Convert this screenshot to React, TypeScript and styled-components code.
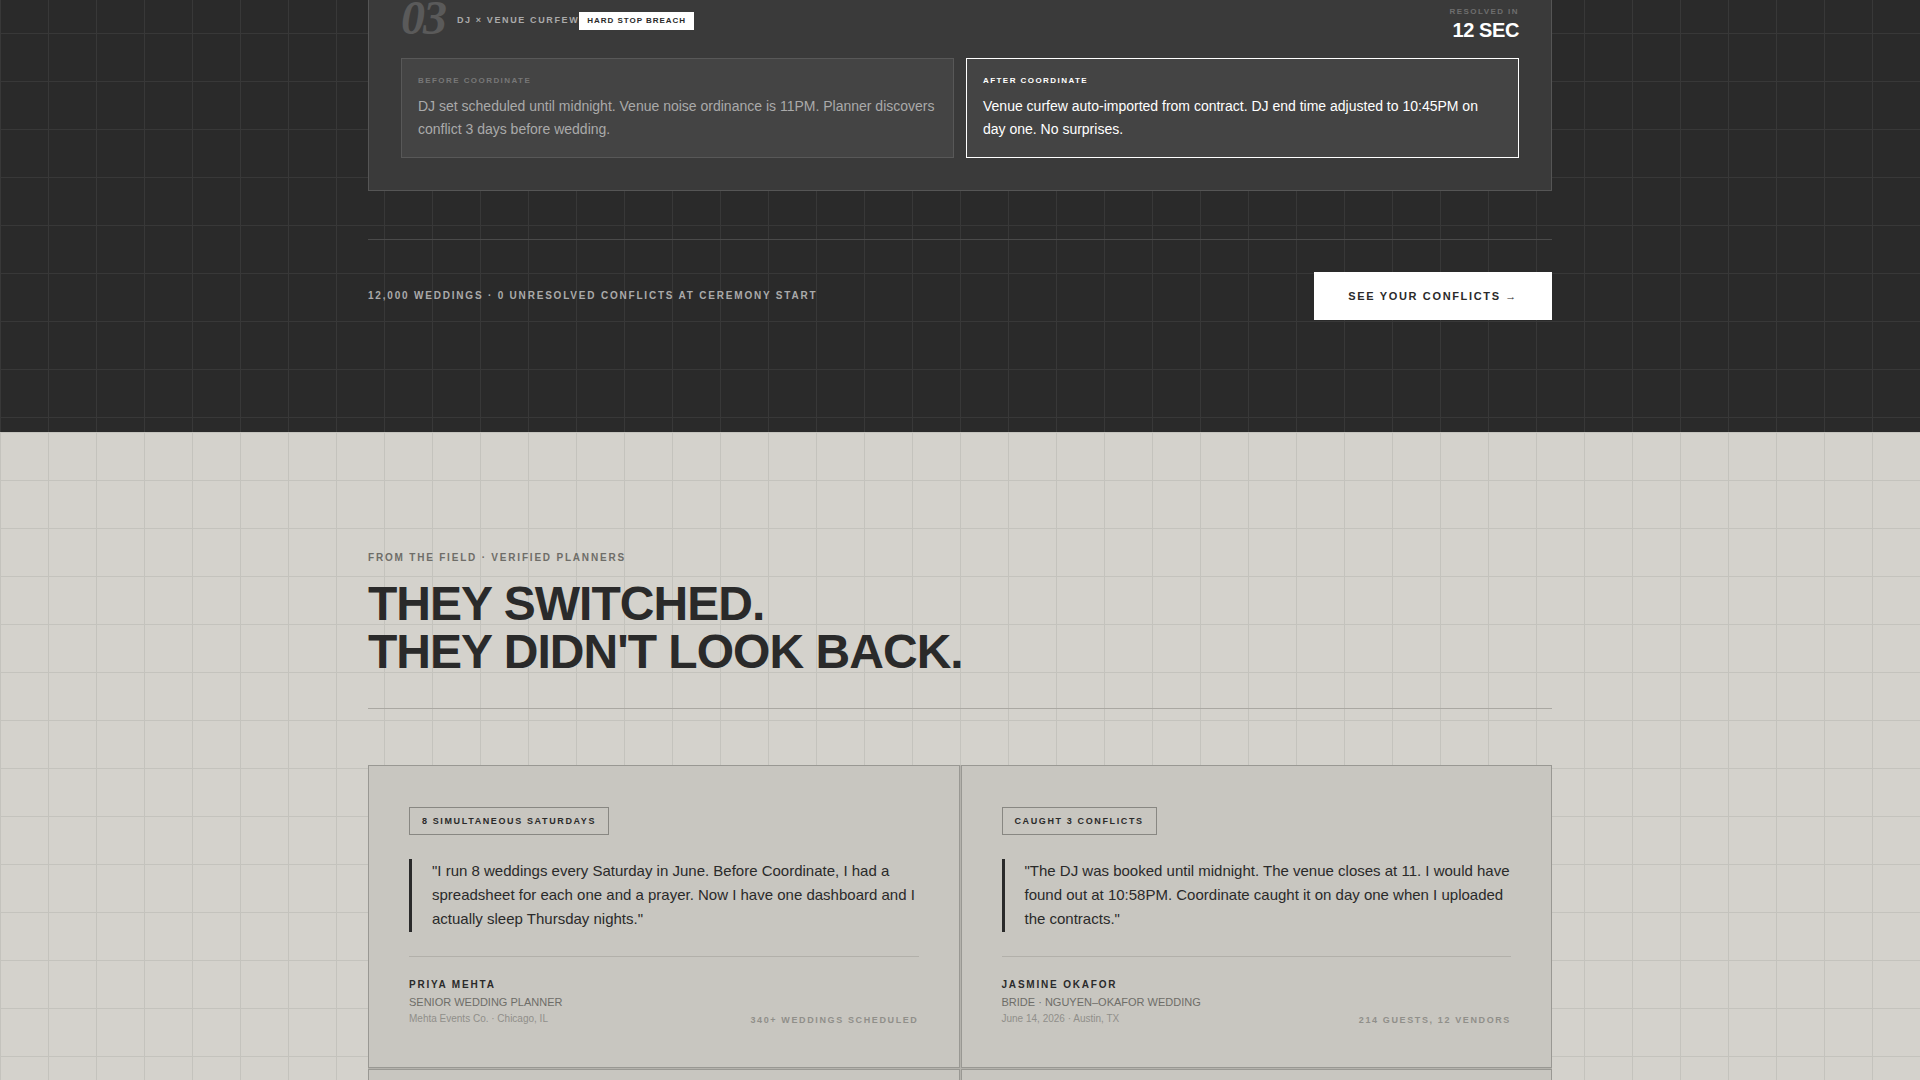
import React from 'react';
import styled, { createGlobalStyle, css } from 'styled-components';

const GlobalStyle = createGlobalStyle`
  *, *::before, *::after { box-sizing: border-box; }
  html, body { margin: 0; padding: 0; }
  body {
    font-family: "Liberation Sans", Arial, sans-serif;
    background: #d4d2cc;
    color: #2a2a2a;
    overflow: hidden;
    height: 100vh;
  }
  p, h2, h3, blockquote, figure { margin: 0; }
`;

const gridLines = (color: string) => css`
  background-image:
    linear-gradient(${color} 1px, transparent 1px),
    linear-gradient(90deg, ${color} 1px, transparent 1px);
  background-size: 48px 48px;
`;

const label = css<{ $size?: number }>`
  font-size: ${({ $size = 10 }) => $size}px;
  letter-spacing: 0.18em;
  font-weight: 700;
  text-transform: uppercase;
`;

const DarkSection = styled.section`
  background-color: #2a2a2a;
  ${gridLines('#383838')}
  background-position: 0 33px;
  padding-bottom: 112px;
`;

const LightSection = styled.section`
  background-color: #d4d2cc;
  ${gridLines('#c4c3bd')}
  padding: 112px 0;
`;

const Container = styled.div`
  max-width: 1280px;
  margin: 0 auto;
  padding: 0 48px;
`;

const ConflictCard = styled.article`
  background: #3a3a3a;
  border: 1px solid #555;
  border-top: 0;
  padding: 0 32px 32px;
`;

const ConflictHeader = styled.header`
  display: flex;
  align-items: flex-start;
  justify-content: space-between;
  height: 58px;
`;

const ConflictTitle = styled.div`
  display: flex;
  align-items: flex-end;
  gap: 12px;
`;

const ConflictNumber = styled.span`
  font-family: "Liberation Serif", "Times New Roman", serif;
  font-size: 48px;
  font-style: italic;
  font-weight: 700;
  line-height: 36px;
  color: #5a5a5a;
  letter-spacing: -2px;
`;

const ConflictMeta = styled.div`
  display: flex;
  align-items: baseline;
  padding-bottom: 6px;
`;

const ConflictName = styled.h3`
  ${label}
  line-height: 12px;
  color: #aaa;
`;

const Severity = styled.span`
  ${label}
  letter-spacing: 0.12em;
  line-height: 12px;
  padding: 3px 8px;
  background: #fff;
  color: #2a2a2a;
`;

const Resolution = styled.div`
  padding-top: 6px;
  text-align: right;
`;

const ResolutionLabel = styled.p`
  ${label}
  line-height: 12px;
  color: #6e6e6e;
`;

const ResolutionTime = styled.p`
  font-size: 20px;
  font-weight: 700;
  line-height: 24px;
  letter-spacing: -0.02em;
  color: #fff;
`;

const Comparison = styled.div`
  display: grid;
  grid-template-columns: 1fr 1fr;
  gap: 12px;
`;

const ComparisonBox = styled.div<{ $active?: boolean }>`
  background: #444;
  border: 1px solid ${({ $active }) => ($active ? '#fff' : '#585858')};
  padding: 16px;
  color: ${({ $active }) => ($active ? '#fff' : '#aaa')};
`;

const ComparisonLabel = styled.p<{ $active?: boolean }>`
  ${label}
  line-height: 12px;
  margin-bottom: 8px;
  color: ${({ $active }) => ($active ? '#fff' : '#777')};
`;

const ComparisonText = styled.p`
  font-size: 14px;
  line-height: 23px;
`;

const SectionFooter = styled.footer`
  display: flex;
  align-items: center;
  justify-content: space-between;
  margin-top: 48px;
  padding-top: 32px;
  border-top: 1px solid #4a4a4a;
`;

const FooterNote = styled.p`
  ${label}
  line-height: 16px;
  color: #aaa;
`;

const CtaLink = styled.a`
  ${label}
  letter-spacing: 0.15em;
  display: inline-flex;
  align-items: center;
  height: 48px;
  padding: 0 34px;
  background: #fff;
  color: #2a2a2a;
  text-decoration: none;
`;

const SectionHeader = styled.header`
  padding-bottom: 32px;
  margin-bottom: 56px;
  border-bottom: 1px solid #aaa8a2;
`;

const Eyebrow = styled.p`
  ${label}
  line-height: 28px;
  margin-bottom: 8px;
  color: #6e6d68;
`;

const Heading = styled.h2`
  font-size: 48px;
  font-weight: 700;
  line-height: 1;
  letter-spacing: -0.02em;
`;

const TestimonialGrid = styled.div`
  display: grid;
  grid-template-columns: 1fr 1fr;
  gap: 1px;
  background: #b4b2ac;
`;

const TestimonialCard = styled.figure`
  background: #c8c6c0;
  border: 1px solid #999893;
  padding: 41px 40px 40px;
`;

const Tag = styled.p`
  ${label}
  width: fit-content;
  line-height: 14px;
  padding: 6px 12px;
  border: 1px solid #888782;
  margin-bottom: 24px;
`;

const Quote = styled.blockquote`
  font-size: 15px;
  line-height: 24px;
  padding: 0 0 1px 20px;
  border-left: 3px solid #2a2a2a;
  margin-bottom: 24px;
`;

const Attribution = styled.figcaption`
  display: flex;
  align-items: flex-end;
  justify-content: space-between;
  border-top: 1px solid #b2b0aa;
  padding-top: 20px;
`;

const PersonName = styled.p`
  ${label}
  line-height: 16px;
`;

const PersonRole = styled.p`
  font-size: 11px;
  line-height: 18px;
  color: #6e6d68;
`;

const PersonDetail = styled.p`
  font-size: 10px;
  line-height: 16px;
  color: #908f8a;
`;

const Stat = styled.p`
  ${label}
  line-height: 14px;
  color: #908f8a;
`;

interface Testimonial {
  tag: string;
  quote: string;
  name: string;
  role: string;
  detail: string;
  stat: string;
}

const testimonials: Testimonial[] = [
  {
    tag: '8 Simultaneous Saturdays',
    quote:
      '"I run 8 weddings every Saturday in June. Before Coordinate, I had a spreadsheet for each one and a prayer. Now I have one dashboard and I actually sleep Thursday nights."',
    name: 'Priya Mehta',
    role: 'SENIOR WEDDING PLANNER',
    detail: 'Mehta Events Co. · Chicago, IL',
    stat: '340+ Weddings Scheduled',
  },
  {
    tag: 'Caught 3 Conflicts',
    quote:
      '"The DJ was booked until midnight. The venue closes at 11. I would have found out at 10:58PM. Coordinate caught it on day one when I uploaded the contracts."',
    name: 'Jasmine Okafor',
    role: 'BRIDE · NGUYEN–OKAFOR WEDDING',
    detail: 'June 14, 2026 · Austin, TX',
    stat: '214 Guests, 12 Vendors',
  },
];

export default function App() {
  return (
    <>
      <GlobalStyle />
      <main>
        <DarkSection>
          <Container>
            <ConflictCard>
              <ConflictHeader>
                <ConflictTitle>
                  <ConflictNumber>03</ConflictNumber>
                  <ConflictMeta>
                    <ConflictName $size={9}>DJ × Venue Curfew</ConflictName>
                    <Severity $size={8}>Hard Stop Breach</Severity>
                  </ConflictMeta>
                </ConflictTitle>
                <Resolution>
                  <ResolutionLabel $size={8}>Resolved In</ResolutionLabel>
                  <ResolutionTime>12 SEC</ResolutionTime>
                </Resolution>
              </ConflictHeader>
              <Comparison>
                <ComparisonBox>
                  <ComparisonLabel $size={8}>Before Coordinate</ComparisonLabel>
                  <ComparisonText>
                    DJ set scheduled until midnight. Venue noise ordinance is 11PM. Planner discovers
                    conflict 3 days before wedding.
                  </ComparisonText>
                </ComparisonBox>
                <ComparisonBox $active>
                  <ComparisonLabel $size={8} $active>After Coordinate</ComparisonLabel>
                  <ComparisonText>
                    Venue curfew auto-imported from contract. DJ end time adjusted to 10:45PM on day
                    one. No surprises.
                  </ComparisonText>
                </ComparisonBox>
              </Comparison>
            </ConflictCard>
            <SectionFooter>
              <FooterNote>12,000 Weddings · 0 Unresolved Conflicts at Ceremony Start</FooterNote>
              <CtaLink href="#conflicts" $size={11}>See Your Conflicts →</CtaLink>
            </SectionFooter>
          </Container>
        </DarkSection>
        <LightSection>
          <Container>
            <SectionHeader>
              <Eyebrow>From the Field · Verified Planners</Eyebrow>
              <Heading>
                THEY SWITCHED.
                <br />
                THEY DIDN'T LOOK BACK.
              </Heading>
            </SectionHeader>
            <TestimonialGrid>
              {testimonials.map((t) => (
                <TestimonialCard key={t.name}>
                  <Tag $size={9}>{t.tag}</Tag>
                  <Quote>{t.quote}</Quote>
                  <Attribution>
                    <div>
                      <PersonName>{t.name}</PersonName>
                      <PersonRole>{t.role}</PersonRole>
                      <PersonDetail>{t.detail}</PersonDetail>
                    </div>
                    <Stat $size={9}>{t.stat}</Stat>
                  </Attribution>
                </TestimonialCard>
              ))}
              <TestimonialCard />
              <TestimonialCard />
            </TestimonialGrid>
          </Container>
        </LightSection>
      </main>
    </>
  );
}
